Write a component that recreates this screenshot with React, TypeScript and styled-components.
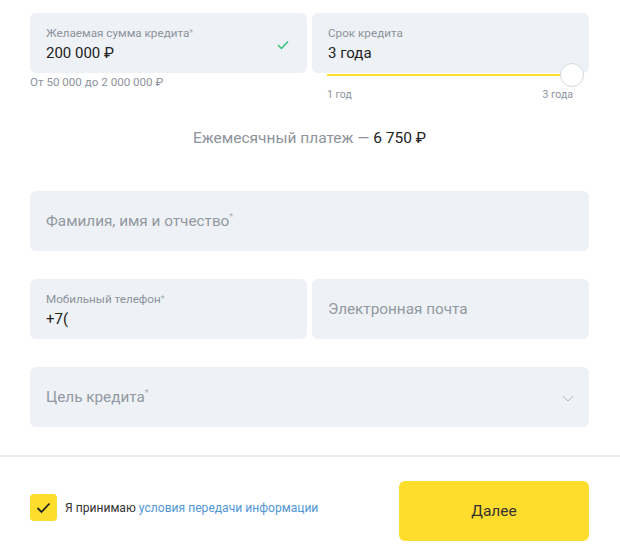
import React from 'react';
import styled, { createGlobalStyle } from 'styled-components';

const GlobalStyle = createGlobalStyle`
    body {
        margin: 0;
        background: #fff;
        font-family: Roboto, 'Liberation Sans', Arial, sans-serif;
        color: #333;
    }
`;

const Page = styled.div`
    width: 620px;
    height: 550px;
    overflow: hidden;
    display: flex;
    flex-direction: column;
`;

const Form = styled.div`
    padding: 13px 31px 0 30px;
    display: flex;
    flex-direction: column;
`;

const Row = styled.div`
    display: grid;
    grid-template-columns: 1fr 1fr;
    column-gap: 5px;
`;

const Column = styled.div`
    display: flex;
    flex-direction: column;
`;

const Field = styled.div`
    position: relative;
    height: 60px;
    box-sizing: border-box;
    background: #eef1f5;
    border-radius: 6px;
    padding: 3px 16px 0;
    display: flex;
    flex-direction: column;
    justify-content: center;
`;

const Label = styled.div`
    font-size: 11.7px;
    line-height: 15px;
    color: #8d939c;
`;

const Star = styled.span`
    font-size: 9px;
    vertical-align: top;
    color: #aab0b8;
`;

const Value = styled.div`
    font-size: 15px;
    line-height: 20px;
    color: #222;
    margin-top: 2px;
`;

const Placeholder = styled.div`
    font-size: 15.3px;
    color: #9299a2;
    margin-top: -3px;
`;

const Hint = styled.div`
    font-size: 11.6px;
    color: #8d939c;
    margin-top: 2px;
`;

const Check = styled.svg`
    position: absolute;
    right: 18px;
    top: 27px;
`;

const Slider = styled.div`
    position: relative;
    height: 2px;
    margin: 1px 17px 0 15px;
    background: #ffdd2d;
`;

const Thumb = styled.div`
    position: absolute;
    right: -12px;
    top: -11px;
    width: 24px;
    height: 24px;
    box-sizing: border-box;
    border-radius: 50%;
    background: #fff;
    border: 1px solid #d4d7dc;
`;

const Scale = styled.div`
    display: flex;
    justify-content: space-between;
    font-size: 10.5px;
    color: #8d939c;
    padding: 12px 16px 0 15px;
`;

const Monthly = styled.div`
    text-align: center;
    font-size: 15.5px;
    color: #8d939c;
    margin-top: 27px;
    height: 20px;
    line-height: 20px;

    b {
        font-weight: 400;
        color: #222;
    }
`;

const Block = styled.div<{ $top: number }>`
    margin-top: ${(p) => p.$top}px;
`;

const Chevron = styled.svg`
    position: absolute;
    right: 15px;
    top: 28px;
`;

const Divider = styled.div`
    height: 2px;
    background: #e9ebee;
    margin-top: 28px;
`;

const Footer = styled.div`
    display: flex;
    align-items: center;
    justify-content: space-between;
    padding: 24px 31px 0 30px;
`;

const Agree = styled.label`
    display: flex;
    align-items: center;
    gap: 8px;
    font-size: 12.1px;
    color: #333;
    margin-bottom: 7px;

    a {
        color: #5197d6;
        text-decoration: none;
    }
`;

const Box = styled.span`
    width: 27px;
    height: 27px;
    border-radius: 4px;
    background: #ffdd2d;
    display: flex;
    align-items: center;
    justify-content: center;
`;

const Button = styled.button`
    width: 190px;
    height: 60px;
    border: 0;
    border-radius: 6px;
    background: #ffdd2d;
    font-family: inherit;
    font-size: 15.5px;
    color: #333;
`;

const App = () => (
    <Page>
        <GlobalStyle />
        <Form>
            <Row>
                <Column>
                    <Field>
                        <Label>
                            Желаемая сумма кредита<Star>*</Star>
                        </Label>
                        <Value>200 000 ₽</Value>
                        <Check width="12" height="10" viewBox="0 0 12 10">
                            <path d="M1 5 L4.5 8.5 L11 1.5" fill="none" stroke="#2fbf7a" strokeWidth="1.4" />
                        </Check>
                    </Field>
                    <Hint>От 50 000 до 2 000 000 ₽</Hint>
                </Column>
                <Column>
                    <Field>
                        <Label>Срок кредита</Label>
                        <Value>3 года</Value>
                    </Field>
                    <Slider>
                        <Thumb />
                    </Slider>
                    <Scale>
                        <span>1 год</span>
                        <span>3 года</span>
                    </Scale>
                </Column>
            </Row>
            <Monthly>
                Ежемесячный платеж — <b>6 750 ₽</b>
            </Monthly>
            <Block $top={43}>
                <Field>
                    <Placeholder>
                        Фамилия, имя и отчество<Star>*</Star>
                    </Placeholder>
                </Field>
            </Block>
            <Block $top={28}>
                <Row>
                    <Field>
                        <Label>
                            Мобильный телефон<Star>*</Star>
                        </Label>
                        <Value>+7(</Value>
                    </Field>
                    <Field>
                        <Placeholder>Электронная почта</Placeholder>
                    </Field>
                </Row>
            </Block>
            <Block $top={28}>
                <Field>
                    <Placeholder>
                        Цель кредита<Star>*</Star>
                    </Placeholder>
                    <Chevron width="12" height="7" viewBox="0 0 12 7">
                        <path d="M1 1 L6 6 L11 1" fill="none" stroke="#b5bac1" strokeWidth="1" />
                    </Chevron>
                </Field>
            </Block>
        </Form>
        <Divider />
        <Footer>
            <Agree>
                <Box>
                    <svg width="15" height="12" viewBox="0 0 15 12">
                        <path d="M1.5 6 L5.5 10 L13.5 1.5" fill="none" stroke="#222" strokeWidth="1.8" />
                    </svg>
                </Box>
                <span>
                    Я принимаю <a href="#">условия передачи информации</a>
                </span>
            </Agree>
            <Button>Далее</Button>
        </Footer>
    </Page>
);

export default App;
